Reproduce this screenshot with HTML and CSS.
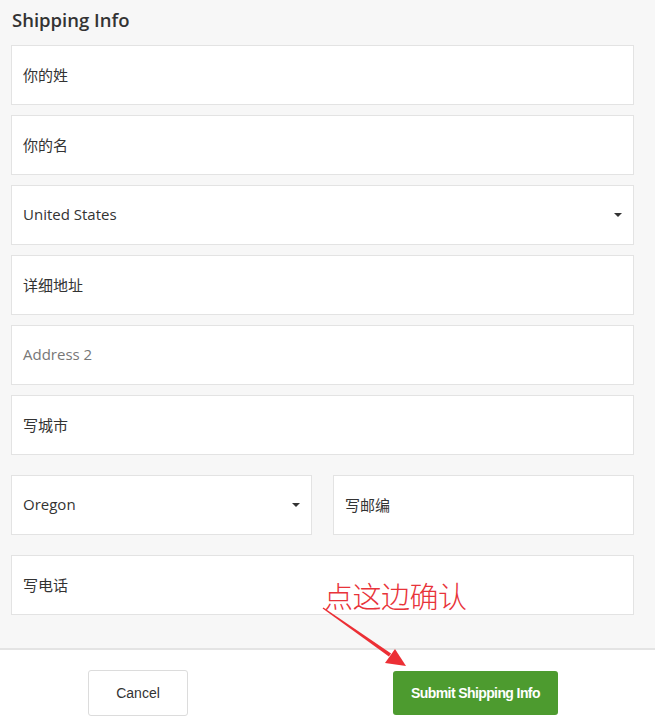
FILE: index.html
```html
<!DOCTYPE html>
<html lang="zh">
<head>
<meta charset="utf-8">
<title>Shipping Info</title>
<link rel="stylesheet" href="styles.css">
</head>
<body>
<div class="page">
  <div class="form">
    <h2 class="title">Shipping Info</h2>
    <div class="field">你的姓</div>
    <div class="field">你的名</div>
    <div class="field select">United States<span class="caret"></span></div>
    <div class="field">详细地址</div>
    <div class="field placeholder">Address 2</div>
    <div class="field">写城市</div>
    <div class="row">
      <div class="field select">Oregon<span class="caret"></span></div>
      <div class="field">写邮编</div>
    </div>
    <div class="field last">写电话</div>
  </div>
  <div class="footer">
    <button class="btn cancel">Cancel</button>
    <button class="btn submit">Submit Shipping Info</button>
  </div>
  <div class="note">点这边确认</div>
  <svg class="arrow" width="655" height="723" viewBox="0 0 655 723">
    <polygon points="322.6,608.4 323.4,607.6 391.1,653.4 388.9,656.6" fill="#ec2f35"/>
    <polygon points="406,666 385,663 395,649" fill="#ec2f35"/>
  </svg>
</div>
</body>
</html>
```
FILE: styles.css
```css
* { box-sizing: border-box; }
html, body { margin: 0; padding: 0; }
body {
  background: #ffffff;
  font-family: "Open Sans", "Noto Sans CJK SC", sans-serif;
  color: #333333;
}
.page {
  position: relative;
  width: 655px;
  height: 723px;
  overflow: hidden;
}
.form {
  background: #f7f7f7;
  padding: 0 21px 33px 11px;
  border-bottom: 2px solid #e4e4e4;
}
.title {
  margin: 0;
  height: 45px;
  padding-top: 7px;
  padding-left: 1px;
  font-size: 18.5px;
  font-weight: 600;
  line-height: 26px;
  color: #333;
}
.field {
  position: relative;
  height: 60px;
  background: #ffffff;
  border: 1px solid #e3e3e3;
  margin-bottom: 10px;
  padding: 0 11px 2px;
  display: flex;
  align-items: center;
  font-size: 15px;
  font-family: "Open Sans", "Noto Sans CJK SC", sans-serif;
  color: #333;
}
.field.placeholder { color: #777777; }
.field.last { margin-bottom: 0; }
.row {
  display: grid;
  grid-template-columns: 1fr 1fr;
  column-gap: 21px;
  margin-top: 20px;
  margin-bottom: 20px;
}
.row .field { margin-bottom: 0; }
.caret {
  position: absolute;
  right: 11px;
  top: 27px;
  width: 0;
  height: 0;
  border-left: 4px solid transparent;
  border-right: 4px solid transparent;
  border-top: 4px solid #333;
}
.footer {
  display: flex;
  align-items: center;
  padding: 20px 0 0 88px;
  gap: 205px;
}
.btn {
  font-family: "Liberation Sans", Arial, sans-serif;
  font-size: 14px;
  font-weight: 700;
  border-radius: 3px;
  cursor: pointer;
}
.cancel {
  width: 100px;
  height: 46px;
  background: #fff;
  border: 1px solid #dcdcdc;
  color: #333;
  font-weight: 400;
}
.submit {
  width: 165px;
  height: 44px;
  background: #4d9b2f;
  border: none;
  color: #fff;
  letter-spacing: -0.6px;
}
.note {
  position: absolute;
  left: 324px;
  top: 575px;
  font-family: "Noto Sans CJK SC", sans-serif;
  font-weight: 300;
  font-size: 29px;
  line-height: 40px;
  color: #e8333a;
  letter-spacing: -0.5px;
}
.arrow {
  position: absolute;
  left: 0;
  top: 0;
  pointer-events: none;
}
```
